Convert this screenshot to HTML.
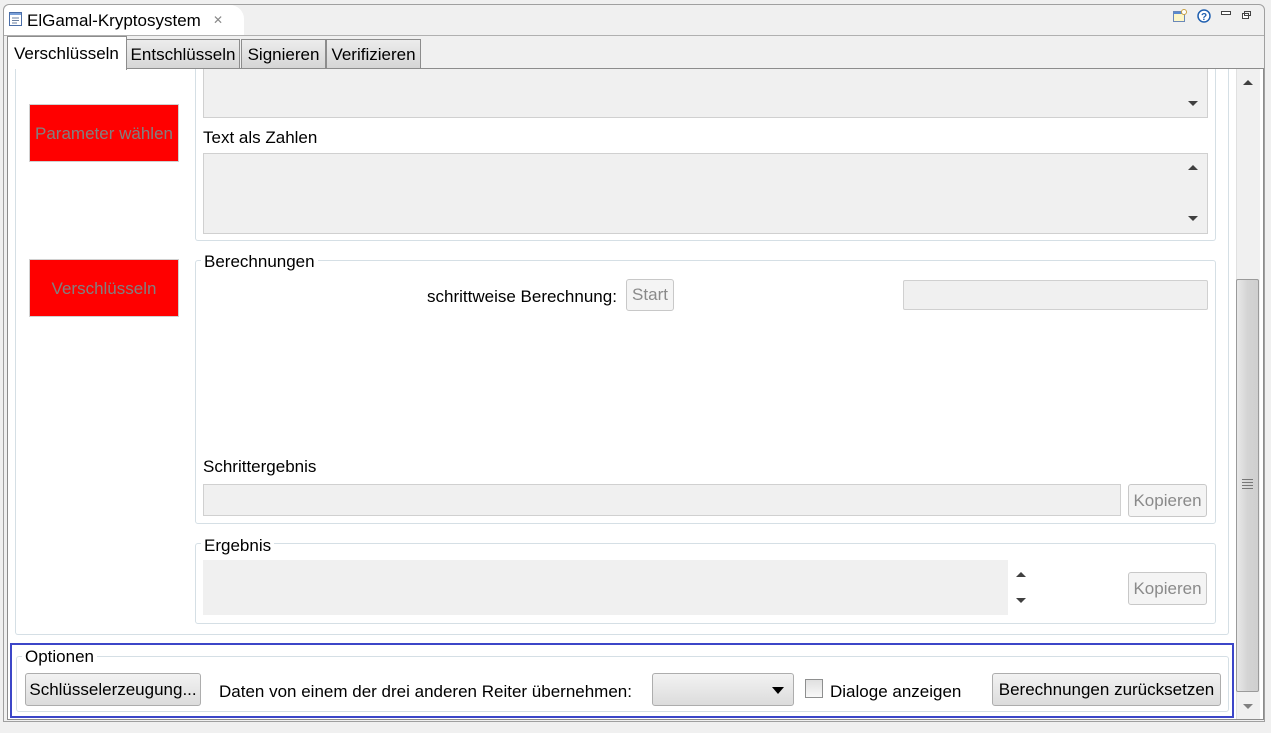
<!DOCTYPE html>
<html><head><meta charset="utf-8"><style>
*{box-sizing:border-box;margin:0;padding:0}
body{width:1271px;height:733px;background:#f0f0f0;position:relative;overflow:hidden;font-family:"Liberation Sans",sans-serif;font-size:17px;color:#000}
.a{position:absolute}
.t{position:absolute;white-space:nowrap;line-height:22px}
.grp{position:absolute;border:1px solid #d5dfe5;border-radius:3px}
.ta{position:absolute;background:#f0f0f0;border:1px solid #d0d0d0}
.btn{position:absolute;border:1px solid #adadad;border-radius:3px;background:linear-gradient(#f2f2f2,#dcdcdc);text-align:center;line-height:31px}
.dis{position:absolute;border:1px solid #c8c8c8;border-radius:3px;background:#f4f4f4;color:#8a8a8a;text-align:center}
.red{position:absolute;background:#ff0000;border:1px solid #d0d0d0;color:#808080;text-align:center;line-height:57px}
.tab{position:absolute;top:39px;height:30px;background:linear-gradient(#ececec,#d6d6d6);border:1px solid #8c8c8c;line-height:29px;text-align:center}
.up,.dn{position:absolute;width:0;height:0;border-left:5px solid transparent;border-right:5px solid transparent}
.up{border-bottom:5px solid #404040}.dn{border-top:5px solid #404040}
</style></head><body>
<div class="a" style="left:3px;top:4px;width:1262px;height:718px;border:1px solid #a0a0a0;border-radius:6px 6px 0 0;background:#f0f0f0"></div>
<div class="a" style="left:4px;top:5px;width:240px;height:31px;background:#fff;border-radius:6px 14px 0 0"></div>
<div class="a" style="left:4px;top:35px;width:1260px;height:1px;background:#b0b0b0"></div>
<svg class="a" style="left:8px;top:11px" width="16" height="16"><rect x="1.5" y="1.5" width="12" height="13" fill="#fff" stroke="#4a6ea8"/><rect x="2" y="2" width="11" height="2" fill="#7aa0d8"/><path d="M4 7h7M4 9.5h7M4 12h5" stroke="#6a7fa0"/></svg>
<div class="t" style="left:27px;top:10px">ElGamal-Kryptosystem</div>
<div class="t" style="left:213px;top:9px;font-size:12px;color:#888">✕</div>
<svg class="a" style="left:1172px;top:8px" width="80" height="16"><rect x="1.5" y="3.5" width="11" height="10" fill="#fdf6c8" stroke="#6a88b8"/><rect x="2" y="4" width="10" height="2" fill="#5a8ad0"/><circle cx="12" cy="4" r="2.5" fill="#fff" stroke="#c8a040"/><circle cx="32" cy="8" r="6" fill="#fff" stroke="#2060b0" stroke-width="1.5"/><text x="29" y="12" font-size="10" font-weight="bold" fill="#2060b0" font-family="Liberation Sans">?</text><rect x="49.5" y="3.5" width="9" height="3" fill="#fff" stroke="#444"/><rect x="70.5" y="5.5" width="6" height="5" fill="#fff" stroke="#444"/><rect x="72.5" y="3.5" width="6" height="4" fill="none" stroke="#444"/></svg>
<div class="tab" style="left:126px;width:114px">Entschlüsseln</div>
<div class="tab" style="left:241px;width:85px">Signieren</div>
<div class="tab" style="left:326px;width:95px">Verifizieren</div>
<div class="a" style="left:7px;top:68px;width:1257px;height:652px;border:1px solid #8c8c8c;background:#fff"></div>
<div class="a" style="left:7px;top:36px;width:120px;height:34px;border:1px solid #8c8c8c;border-bottom:none;background:#fff"></div>
<div class="t" style="left:14px;top:43px">Verschlüsseln</div>
<div class="a" style="left:15px;top:69px;width:1214px;height:566px;border:1px solid #d5dfe5;border-top:none;border-radius:0 0 3px 3px"></div>
<div class="a" style="left:195px;top:69px;width:1021px;height:172px;border:1px solid #d5dfe5;border-top:none;border-radius:0 0 3px 3px"></div>
<div class="ta" style="left:203px;top:69px;width:1005px;height:49px;border-top:none"></div>
<div class="dn" style="left:1188px;top:101px"></div>
<div class="red" style="left:29px;top:104px;width:150px;height:58px">Parameter wählen</div>
<div class="t" style="left:203px;top:127px">Text als Zahlen</div>
<div class="ta" style="left:203px;top:153px;width:1005px;height:81px"></div>
<div class="up" style="left:1188px;top:165px"></div>
<div class="dn" style="left:1188px;top:216px"></div>
<div class="grp" style="left:195px;top:260px;width:1021px;height:264px"></div>
<div class="t" style="left:201px;top:251px;background:#fff;padding:0 3px">Berechnungen</div>
<div class="red" style="left:29px;top:259px;width:150px;height:58px">Verschlüsseln</div>
<div class="t" style="left:427px;top:286px">schrittweise Berechnung:</div>
<div class="dis" style="left:626px;top:279px;width:48px;height:32px;line-height:30px">Start</div>
<div class="ta" style="left:903px;top:280px;width:305px;height:30px;border-radius:2px"></div>
<div class="t" style="left:203px;top:456px">Schrittergebnis</div>
<div class="ta" style="left:203px;top:484px;width:918px;height:32px"></div>
<div class="dis" style="left:1128px;top:484px;width:79px;height:33px;line-height:31px">Kopieren</div>
<div class="grp" style="left:195px;top:543px;width:1021px;height:81px"></div>
<div class="t" style="left:201px;top:535px;background:#fff;padding:0 3px">Ergebnis</div>
<div class="ta" style="left:203px;top:560px;width:832px;height:55px;border:none"></div>
<div class="a" style="left:1008px;top:560px;width:27px;height:55px;background:#fff"></div>
<div class="up" style="left:1016px;top:572px"></div>
<div class="dn" style="left:1016px;top:598px"></div>
<div class="dis" style="left:1128px;top:572px;width:79px;height:33px;line-height:31px">Kopieren</div>
<div class="a" style="left:10px;top:643px;width:1224px;height:75px;border:2px solid #3c46c8"></div>
<div class="grp" style="left:16px;top:656px;width:1213px;height:56px"></div>
<div class="t" style="left:22px;top:646px;background:#fff;padding:0 3px">Optionen</div>
<div class="btn" style="left:25px;top:673px;width:176px;height:33px">Schlüsselerzeugung...</div>
<div class="t" style="left:219px;top:681px">Daten von einem der drei anderen Reiter übernehmen:</div>
<div class="btn" style="left:652px;top:673px;width:142px;height:33px"></div>
<div class="dn" style="left:772px;top:687px;border-top-color:#000;border-left-width:6px;border-right-width:6px;border-top-width:7px"></div>
<div class="a" style="left:805px;top:679px;width:18px;height:19px;border:1px solid #8e8f8f;background:linear-gradient(#e0e0e0,#f8f8f8)"></div>
<div class="t" style="left:830px;top:681px">Dialoge anzeigen</div>
<div class="btn" style="left:992px;top:673px;width:229px;height:33px">Berechnungen zurücksetzen</div>
<div class="a" style="left:1236px;top:69px;width:24px;height:650px;background:#f0f0f0;border-left:1px solid #e0e0e0"></div>
<div class="up" style="left:1243px;top:80px"></div>
<div class="dn" style="left:1243px;top:704px;border-top-color:#808080"></div>
<div class="a" style="left:1236px;top:279px;width:23px;height:413px;border:1px solid #9a9a9a;border-radius:2px;background:linear-gradient(90deg,#e8e8e8,#d4d4d4 50%,#cfcfcf)"></div>
<div class="a" style="left:1242px;top:479px;width:11px;height:11px;background:repeating-linear-gradient(#777 0 1px,transparent 1px 3px)"></div>
</body></html>
